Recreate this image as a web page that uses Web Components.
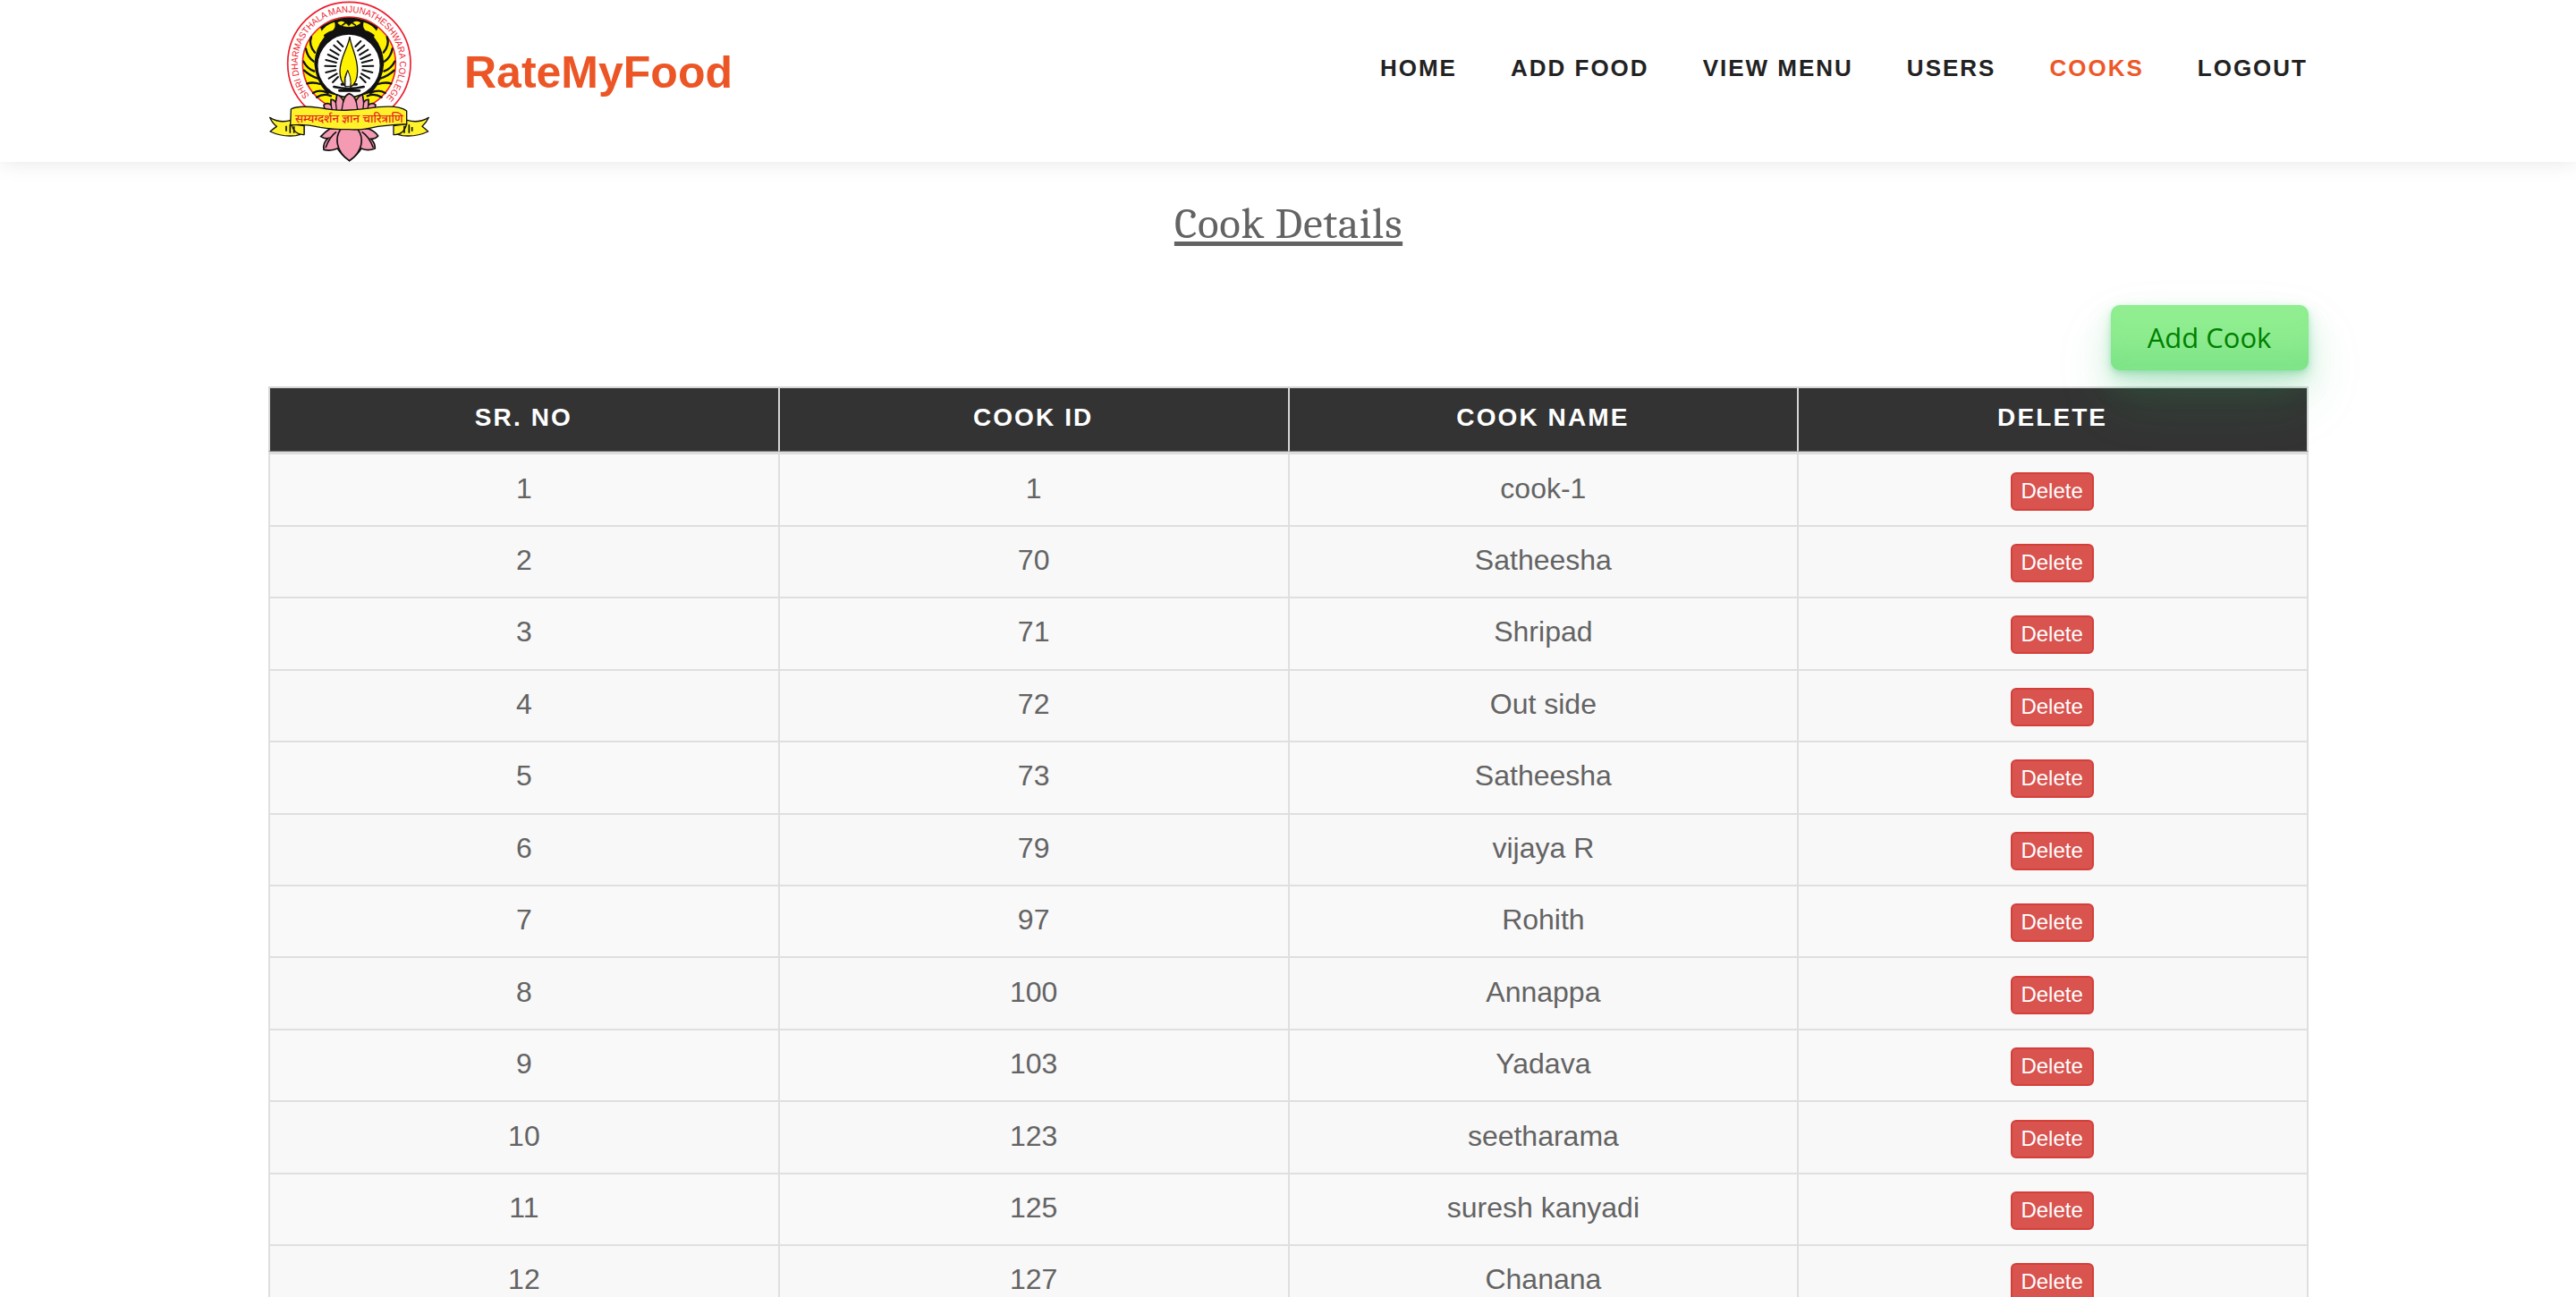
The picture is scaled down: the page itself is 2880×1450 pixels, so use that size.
<!DOCTYPE html>
<html lang="en">
<head>
<meta charset="utf-8">
<title>RateMyFood</title>
<style>
html,body{margin:0;height:1450px;overflow:hidden;background:#fff}
body{font-family:Arial,"Liberation Sans",sans-serif;color:#636363}
</style>
</head>
<body>
<cooks-page></cooks-page>
<script>
const define = (name, html) => customElements.define(name, class extends HTMLElement {
  constructor() {
    super();
    this.attachShadow({mode: 'open'}).innerHTML = html;
  }
});

const rays = [[262,138,280,156],[250,152,272,170],[238,167,266,184],[230,183,262,198],[223,201,258,210],[220,221,256,222],[223,243,256,235],[233,263,260,247],[246,276,264,258]]
  .map(([a,b,c,d]) => `M${a} ${b}L${c} ${d}M${602-a} ${b}L${602-c} ${d}`).join('');

define('college-crest', `
<style>:host{display:block;width:180px;height:181px}svg{display:block;width:180px;height:181px}</style>
<svg viewBox="33 0 540 543">
  <defs><path id="ring" d="M168 321.700A171 171 0 1 1 425 329"/></defs>
  <circle cx="301" cy="213" r="206" fill="#fff" stroke="#ee1c2e" stroke-width="5"/>
  <circle cx="301" cy="213" r="156" fill="#fff200" stroke="#ee1c2e" stroke-width="5"/>
  <path d="M204 92Q222 78 252 67Q300 50 351 67Q380 78 398 92L384 124Q414 160 418 212Q414 270 378 310L352 318H250L224 310Q188 270 184 212Q188 160 218 124Z" fill="#111"/>
  <circle cx="300" cy="220" r="106" fill="#fff" stroke="#111" stroke-width="5"/>
  <path d="M206 108Q222 82 252 74Q258 90 246 102Q226 106 202 130ZM396 108Q380 82 350 74Q344 90 356 102Q376 106 400 130Z" fill="#fff200"/>
  <path d="M258 76Q278 58 300 84Q322 58 344 76Q328 94 300 92Q272 94 258 76Z" fill="#fff200" stroke="#111" stroke-width="5"/>
  <path d="M276 86L300 69L324 86" fill="none" stroke="#111" stroke-width="5"/>
  <g fill="none" stroke="#111" stroke-width="6" stroke-linecap="round">
    <path d="M174 124Q164 150 186 176M156 163Q160 190 182 206M148 206Q160 230 184 239M150 236Q168 254 198 264M160 280Q180 274 204 282M180 312Q200 298 230 312M192 326Q216 312 240 322" stroke-width="7"/>
    <path d="M428 124Q438 150 416 176M446 163Q442 190 420 206M454 206Q442 230 418 239M452 236Q434 254 404 264M442 280Q422 274 398 282M422 312Q402 298 372 312M410 326Q386 312 362 322" stroke-width="7"/>
    <path d="${rays}"/>
    <path d="M250 291Q300 303 350 291M268 304H336M276 283H326" stroke-width="8"/>
  </g>
  <path d="M303 123C307 160 330 190 329 238Q329 278 306 292Q305 262 296 238Q282 262 287 288Q270 272 270 238C271 190 298 160 303 123Z" fill="#fff200" stroke="#111" stroke-width="4"/>
  <path d="M296 236Q310 264 305 290H288Q284 262 296 236Z" fill="#fff" stroke="#111" stroke-width="3"/>
  <path d="M216 352Q228 342 240 352V334Q248 332 256 343L260 318Q272 320 282 338Q288 318 302 314Q318 320 324 338Q334 320 346 318L350 343Q358 332 366 334V352Q380 342 390 352L380 392H224Z" fill="#f49ab3" stroke="#111" stroke-width="5"/>
  <path d="M240 350L246 382M256 342L260 382M282 336L274 382M324 336L332 382M350 342L346 382M366 350L360 382" fill="none" stroke="#111" stroke-width="4"/>
  <path d="M236 432Q218 444 206 458Q218 466 230 464Q212 480 216 502Q240 508 262 498Q278 522 302 539Q326 522 342 498Q364 508 388 498Q388 478 374 466Q390 466 398 456Q388 440 366 432Z" fill="#f49ab3" stroke="#111" stroke-width="5"/>
  <path d="M272 434C254 460 254 506 302 539C350 506 350 460 330 434M258 442Q234 460 222 496M344 442Q370 460 382 496" fill="#f49ab3" stroke="#111" stroke-width="5"/>
  <g fill="#fff22a" stroke="#111" stroke-width="4" stroke-linejoin="round">
    <path d="M106 403Q70 415 35 394Q42 412 58 424Q44 434 36 441Q76 460 122 455L150 448V412Z"/>
    <path d="M496 403Q532 415 568 394Q560 412 546 424Q558 434 566 441Q526 460 480 455L452 448V412Z"/>
    <path d="M106 416L150 422V452Q118 454 106 416ZM494 416L450 422V452Q484 454 494 416Z"/>
    <path d="M106 366Q130 352 204 362Q260 372 301 369Q340 368 398 359Q470 352 494 372V416Q450 418 398 424Q340 438 301 434Q240 434 204 427Q150 414 104 420Z"/>
  </g>
  <path d="M90 422V440M103 418V446M116 424V446M486 422V446M502 418V446M512 426V440" stroke="#111" stroke-width="5"/>
  <text font-family="Arial,'Liberation Sans',sans-serif" font-size="31" fill="#ee1c2e"><textPath href="#ring" textLength="784" lengthAdjust="spacingAndGlyphs">SHRI DHARMASTHALA MANJUNATHESHWARA COLLEGE</textPath></text>
  <text x="301" y="411" text-anchor="middle" textLength="362" lengthAdjust="spacingAndGlyphs" font-family="'Noto Sans Devanagari','Lohit Devanagari',FreeSans,sans-serif" font-size="38" fill="#e31b23" stroke="#e31b23" stroke-width=".6">सम्यग्दर्शन ज्ञान चारित्राणि</text>
</svg>`);

define('nav-item', `
<style>
:host{display:block;font-weight:700;font-size:26px;line-height:30px;letter-spacing:2px;color:#222;white-space:nowrap}
:host([active]){color:#ee5728}
</style><slot></slot>`);

define('site-header', `
<style>
:host{display:block;height:181px;background:#fff;box-shadow:0 0 24px rgba(0,0,0,.1);position:relative}
.inner{width:2280px;margin:0 auto;height:181px;display:flex;align-items:flex-start}
college-crest{margin-left:1px}
.brand{margin:53px 0 0 38px;font-size:50px;line-height:57px;font-weight:700;color:#ec5525}
nav{display:flex;gap:60px;margin:61px 0 0 auto}
</style>
<div class="inner"><college-crest></college-crest><div class="brand">RateMyFood</div>
<nav><slot></slot></nav></div>`);

define('add-button', `
<style>
:host{display:block;position:relative;z-index:1}
button{display:block;box-sizing:border-box;width:221px;height:73px;border:0;border-radius:10px;background:lightgreen;color:green;
font:400 31px/44px "Segoe UI","Open Sans",sans-serif;padding:0 1px 1px 0;
box-shadow:rgba(44,187,99,.2) 0 -50px 36px -28px inset,rgba(44,187,99,.15) 0 2px 4px,rgba(44,187,99,.15) 0 4px 8px,rgba(44,187,99,.15) 0 8px 16px,rgba(44,187,99,.15) 0 16px 32px,rgba(44,187,99,.15) 0 32px 64px}
</style><button><slot></slot></button>`);

define('delete-button', `
<style>
:host{display:block;margin-right:2px}
button{display:block;box-sizing:border-box;width:93px;height:43px;border:2px solid #d43f3a;border-radius:6px;background:#d9534f;color:#fff;
font:24px/38px Arial,"Liberation Sans",sans-serif;padding:0 0 1px}
</style><button>Delete</button>`);

customElements.define('cook-row', class extends HTMLElement {
  constructor() {
    super();
    const cells = ['no', 'cook', 'name'].map(k => `<div>${this.getAttribute(k)}</div>`).join('');
    this.attachShadow({mode: 'open'}).innerHTML = `
<style>
:host{display:grid;grid-template-columns:repeat(3,569.75px) 1fr;height:80.45px;box-sizing:border-box;border-bottom:2px solid #dfdfdf;background:#f9f9f9;font-size:32px;line-height:36px}
:host(:nth-child(even)){background:#f8f8f8}
div{border-left:2px solid #dfdfdf;display:flex;justify-content:center;padding-top:19.2px}
div:last-child{border-right:2px solid #dfdfdf}
</style>${cells}<div><delete-button></delete-button></div>`;
  }
});

define('cook-table', `
<style>
:host{display:block;width:2281px}
.head{display:grid;grid-template-columns:repeat(3,569.75px) 1fr;height:76.4px;box-sizing:border-box;border-top:2px solid #d5d5d5;border-bottom:3px solid #dddbdd;background:#333;color:#fff;font-size:28px;line-height:32px;font-weight:700;letter-spacing:2.1px}
.head div{border-left:2px solid #d5d5d5;border-bottom:1px solid #777;text-align:center;padding:17px 1px 0 0}
.head div:last-child{border-right:2px solid #d5d5d5}
</style>
<div class="head"><div>SR. NO</div><div>COOK ID</div><div>COOK NAME</div><div>DELETE</div></div><slot></slot>`);

const cooks = [['1','cook-1'],['70','Satheesha'],['71','Shripad'],['72','Out side'],['73','Satheesha'],['79','vijaya R'],['97','Rohith'],['100','Annappa'],['103','Yadava'],['123','seetharama'],['125','suresh kanyadi'],['127','Chanana']];

define('cooks-page', `
<style>
:host{display:block}
main{width:2281px;margin:0 auto 0 300px;display:flex;flex-direction:column}
h1{margin:38px auto 0;height:122px;font:400 49px/62px Cambria,Caladea,"Noto Serif","Liberation Serif",serif;letter-spacing:.75px;text-decoration:underline;text-decoration-thickness:5px;text-underline-offset:4px}
add-button{align-self:flex-end}
cook-table{margin-top:18px}
</style>
<site-header><nav-item>HOME</nav-item><nav-item>ADD FOOD</nav-item><nav-item>VIEW MENU</nav-item><nav-item>USERS</nav-item><nav-item active>COOKS</nav-item><nav-item>LOGOUT</nav-item></site-header>
<main><h1>Cook Details</h1><add-button>Add Cook</add-button>
<cook-table>${cooks.map(([id, name], i) => `<cook-row no="${i + 1}" cook="${id}" name="${name}"></cook-row>`).join('')}</cook-table></main>`);
</script>
</body>
</html>
